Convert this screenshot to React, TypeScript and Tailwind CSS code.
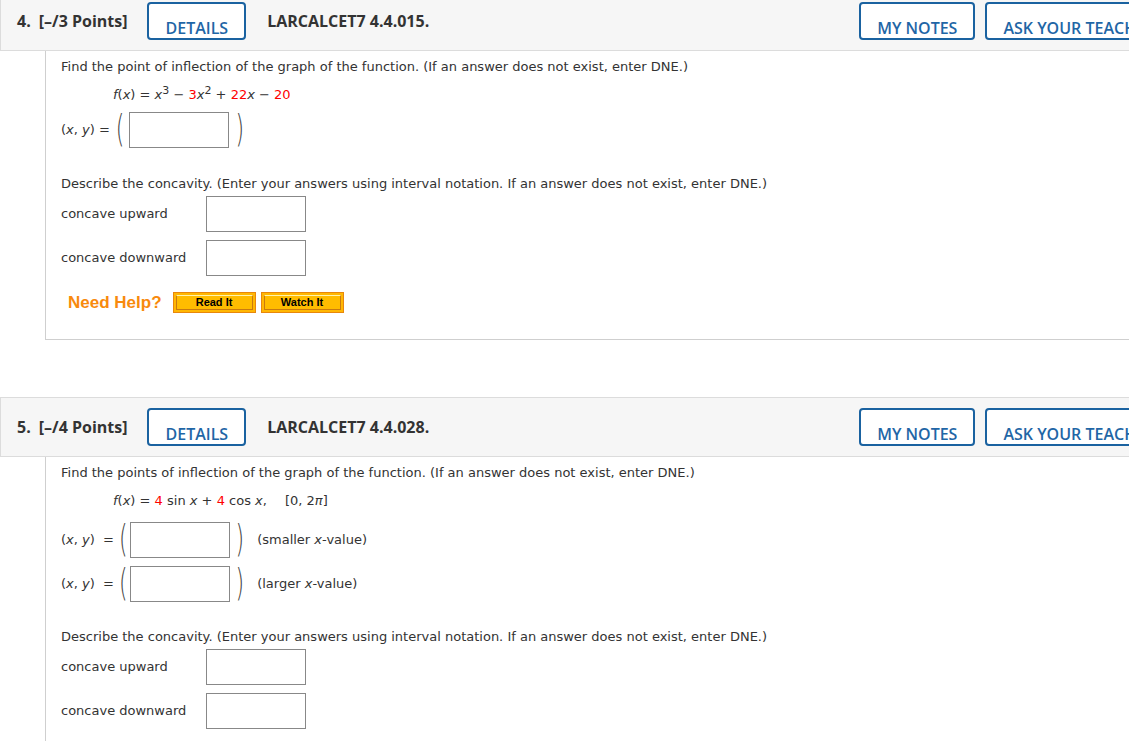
import React from "react";

const body = "[font-family:'DejaVu_Sans',Verdana,sans-serif] text-[13px] leading-[18px] text-[#333]";

const HeaderButton = ({ label, className = "" }: { label: string; className?: string }) => (
  <button
    className={`h-[38px] px-[16px] pt-[16px] pb-[4px] border-2 border-[#1a62a0] rounded-[4px] bg-white text-[#1f66a6] text-[16px] font-semibold leading-none whitespace-nowrap ${className}`}
  >
    {label}
  </button>
);

const QuestionHeader = ({ num, points, code }: { num: string; points: string; code: string }) => (
  <div className="w-[1240px] h-[60px] flex items-center border border-[#dcdcdc] bg-[#f6f6f6] [font-family:'Open_Sans',sans-serif] text-[16px] text-[#333]">
    <span className="ml-[16px] font-bold">{num}</span>
    <span className="ml-[8px] font-bold">{points}</span>
    <HeaderButton label="DETAILS" className="ml-[20px]" />
    <span className="ml-[21px] font-bold w-[592px]">{code}</span>
    <HeaderButton label="MY NOTES" />
    <HeaderButton label="ASK YOUR TEACHER" className="ml-[10px]" />
  </div>
);

const Box = () => <div className="w-[100px] h-[36px] border border-[#888] bg-white" />;

const Paren = ({ c }: { c: string }) => (
  <span className="inline-block text-[22px] font-extralight text-[#444] scale-y-[1.7] leading-none [font-family:'DejaVu_Sans',sans-serif]">
    {c}
  </span>
);

const Concavity = () => (
  <>
    <div>
      Describe the concavity. (Enter your answers using interval notation. If an answer does not exist, enter DNE.)
    </div>
    <div className="flex items-center mt-[3px]">
      <span className="w-[145px]">concave upward</span>
      <Box />
    </div>
    <div className="flex items-center mt-[8px]">
      <span className="w-[145px]">concave downward</span>
      <Box />
    </div>
  </>
);

const HelpButton = ({ label }: { label: string }) => (
  <button className="w-[83px] h-[21px] border border-[#e8870c] bg-[#ffb703] p-[2px]">
    <span className="flex h-full items-center justify-center border border-[#c97a10] border-t-[#fff3b0] bg-[#ffbc00] [font-family:'Liberation_Sans',Arial,sans-serif] text-[11px] font-bold text-black leading-none">
      {label}
    </span>
  </button>
);

export default function App() {
  return (
    <div className="w-[1129px] h-[741px] overflow-hidden bg-white">
      <div className="-mt-[9px]">
        <QuestionHeader num="4." points="[–/3 Points]" code="LARCALCET7 4.4.015." />
        <div className={`ml-[45px] w-[1200px] h-[289px] border-l border-b border-[#cfcfcf] pl-[15px] pt-[7px] flex flex-col ${body}`}>
          <div>Find the point of inflection of the graph of the function. (If an answer does not exist, enter DNE.)</div>
          <div className="mt-[10px] ml-[52px]">
            <i>f</i>(<i>x</i>) = <i>x</i>
            <sup className="text-[11px]">3</sup> − <span className="text-[#f00]">3</span>
            <i>x</i>
            <sup className="text-[11px]">2</sup> + <span className="text-[#f00]">22</span>
            <i>x</i> − <span className="text-[#f00]">20</span>
          </div>
          <div className="flex items-center mt-[8px]">
            <span>
              (<i>x</i>, <i>y</i>) =
            </span>
            <span className="ml-[6px] mr-[5px]">
              <Paren c="(" />
            </span>
            <Box />
            <span className="ml-[6px]">
              <Paren c=")" />
            </span>
          </div>
          <div className="mt-[27px]">
            <Concavity />
          </div>
          <div className="flex items-center mt-[16px] ml-[7px] gap-[5px]">
            <span className="[font-family:'Liberation_Sans',Arial,sans-serif] text-[17px] font-bold text-[#f88a0d] mr-[6px]">
              Need Help?
            </span>
            <HelpButton label="Read It" />
            <HelpButton label="Watch It" />
          </div>
        </div>

        <div className="mt-[57px]">
          <QuestionHeader num="5." points="[–/4 Points]" code="LARCALCET7 4.4.028." />
        </div>
        <div className={`ml-[45px] w-[1200px] h-[300px] border-l border-[#cfcfcf] pl-[15px] pt-[7px] flex flex-col ${body}`}>
          <div>Find the points of inflection of the graph of the function. (If an answer does not exist, enter DNE.)</div>
          <div className="mt-[10px] ml-[52px] flex">
            <span>
              <i>f</i>(<i>x</i>) = <span className="text-[#f00]">4</span> sin <i>x</i> + <span className="text-[#f00]">4</span> cos <i>x</i>,
            </span>
            <span className="ml-[18px]">
              [0, 2<i>π</i>]
            </span>
          </div>
          {["(smaller ", "(larger "].map((t, i) => (
            <div key={t} className={`flex items-center ${i === 0 ? "mt-[12px]" : "mt-[8px]"}`}>
              <span>
                (<i>x</i>, <i>y</i>)&nbsp; =
              </span>
              <span className="ml-[5px] mr-[2px]">
                <Paren c="(" />
              </span>
              <Box />
              <span className="ml-[6px]">
                <Paren c=")" />
              </span>
              <span className="ml-[13px]">
                {t}
                <i>x</i>-value)
              </span>
            </div>
          ))}
          <div className="mt-[26px]">
            <Concavity />
          </div>
        </div>
      </div>
    </div>
  );
}
